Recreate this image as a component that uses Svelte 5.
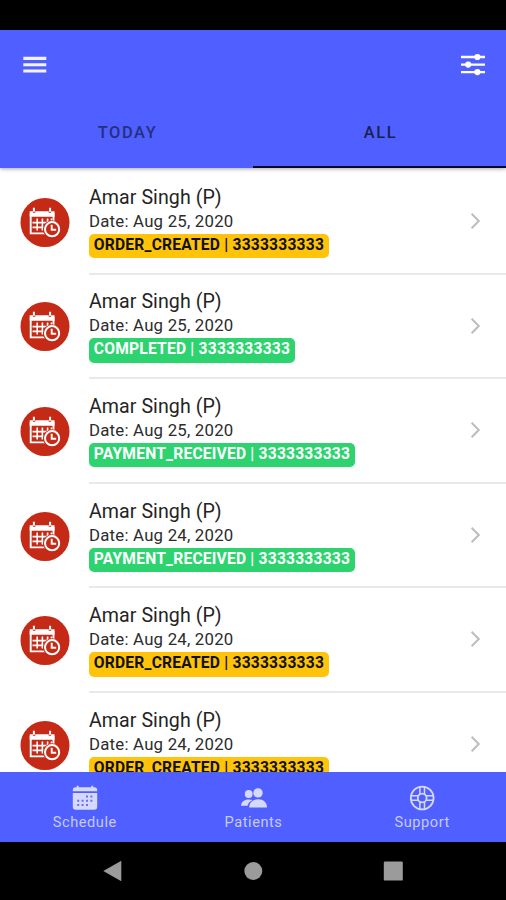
<script>
  const orders = [
    { name: 'Amar Singh (P)', date: 'Aug 25, 2020', status: 'ORDER_CREATED', phone: '3333333333' },
    { name: 'Amar Singh (P)', date: 'Aug 25, 2020', status: 'COMPLETED', phone: '3333333333' },
    { name: 'Amar Singh (P)', date: 'Aug 25, 2020', status: 'PAYMENT_RECEIVED', phone: '3333333333' },
    { name: 'Amar Singh (P)', date: 'Aug 24, 2020', status: 'PAYMENT_RECEIVED', phone: '3333333333' },
    { name: 'Amar Singh (P)', date: 'Aug 24, 2020', status: 'ORDER_CREATED', phone: '3333333333' },
    { name: 'Amar Singh (P)', date: 'Aug 24, 2020', status: 'ORDER_CREATED', phone: '3333333333' }
  ];
</script>

<div class="screen">
  <div class="status"></div>
  <header>
    <div class="toolbar">
      <svg width="24" height="18" viewBox="0 0 24 18" fill="#f3f4ff" aria-label="Menu">
        <path d="M.3 .8h23v3.1H.3zM.3 7.2h23v3.1H.3zM.3 13.5h23v3.1H.3z" />
      </svg>
      <svg width="26" height="24" viewBox="0 0 26 24" fill="#fff" aria-label="Filters">
        <path d="M1 2.8h24v2.4H1zM1 10.4h24v2.4H1zM1 17.9h24v2.4H1z" />
        <circle cx="17.4" cy="4" r="3.1" /><circle cx="8.2" cy="11.6" r="3.1" /><circle cx="17.4" cy="19.1" r="3.1" />
      </svg>
    </div>
    <nav class="tabs">
      <div class="tab"><span>TODAY</span></div>
      <div class="tab active"><span>ALL</span></div>
    </nav>
  </header>

  <main>
    {#each orders as order}
      <div class="row">
        <svg class="avatar" width="50" height="49" viewBox="-.5 0 50 49">
          <circle cx="24.5" cy="24.5" r="24.5" fill="#c42a16" />
          <g stroke="#fff" fill="none">
            <path d="M10.2 15v20.4H27M33 15v9.5" stroke-width="1.9" />
            <path d="M9.2 13.2h3.2v1.6h2.4v-1.6h13.4v1.6h2.4v-1.6h3.4v5.6H9.2z" fill="#fff" stroke="none" />
            <path d="M13.4 9.8v4M29.6 9.8v4" stroke-width="2" />
            <path d="M12 24.6h18.5M12 29.4h13.5M16.7 20.5v12M21.9 20.5v12M27.1 20.5v5.5M31 20.5v3" stroke-width="1.6" />
            <circle cx="31.6" cy="31.2" r="9" fill="#c42a16" stroke="none" />
            <circle cx="31.6" cy="31.2" r="7.1" stroke-width="2" />
            <path d="M31.2 26.8v4.9h4.5" stroke-width="1.9" />
          </g>
        </svg>
        <div class="body">
          <div class="info">
            <div class="name">{order.name}</div>
            <div class="date">Date: {order.date}</div>
            <div class="badge" class:pending={order.status === 'ORDER_CREATED'}>{order.status} | {order.phone}</div>
          </div>
          <svg class="chevron" width="12" height="18" viewBox="0 0 12 18" fill="none" stroke="#bdbdbd" stroke-width="2">
            <path d="M1.6 1.7 8.8 9l-7.2 7.3" />
          </svg>
        </div>
      </div>
    {/each}
  </main>

  <nav class="bottom">
    <div class="item">
      <svg width="26" height="26" viewBox="0 0 26 26" fill="#d6d9ff">
        <path d="M3.8 2.2h1V.8h1.9v1.4h12.6V.8h1.9v1.4h1a3 3 0 0 1 3 3v1.1H.8V5.2a3 3 0 0 1 3-3zM.8 8h24.4v13.7a3 3 0 0 1-3 3H3.8a3 3 0 0 1-3-3z" />
        <path fill="#6570fa" d="M14 10.5h2v2h-2zM18.4 10.5h2v2h-2zM5.2 14.8h2v2h-2zM9.6 14.8h2v2h-2zM14 14.8h2v2h-2zM18.4 14.8h2v2h-2zM5.2 19h2v2h-2zM9.6 19h2v2h-2zM14 19h2v2h-2z" />
      </svg>
      <span>Schedule</span>
    </div>
    <div class="item">
      <svg width="26" height="26" viewBox="0 0 26 26" fill="#d6d9ff">
        <circle cx="17" cy="7.9" r="4.7" />
        <path d="M8.2 22.4c0-5 3.6-8.2 8.9-8.2s8.9 3.2 8.9 8.2z" />
        <circle cx="7.7" cy="9" r="3.9" />
        <path d="M0 20.8c.2-4 3.2-6.4 7.7-6.4 1.5 0 2.8.2 3.9.7-3 1.5-4.5 3.3-5 5.7z" />
      </svg>
      <span>Patients</span>
    </div>
    <div class="item">
      <svg width="26" height="26" viewBox="0 0 26 26" fill="none" stroke="#d6d9ff" stroke-width="1.8">
        <circle cx="13.2" cy="13" r="11.4" /><circle cx="13.2" cy="13" r="4.4" />
        <path d="M10.9 1.8v7.3M15.5 1.8v7.3M10.9 16.9v7.3M15.5 16.9v7.3M2 10.7h7.3M2 15.3h7.3M17.1 10.7h7.3M17.1 15.3h7.3" stroke-width="1.5" />
      </svg>
      <span>Support</span>
    </div>
  </nav>

  <div class="system">
    <svg width="20" height="22" viewBox="0 0 20 22" fill="#9b9b9b"><path d="M18.3.8v20.4L.3 11z" /></svg>
    <svg width="20" height="22" viewBox="0 0 20 22" fill="#9b9b9b"><circle cx="10.3" cy="11" r="9" /></svg>
    <svg width="20" height="22" viewBox="0 0 20 22" fill="#9b9b9b"><rect x=".8" y="1.6" width="19" height="19" rx="1.2" /></svg>
  </div>
</div>

<style>
  :global(body) {
    margin: 0;
    background: #000;
  }
  .screen {
    display: flex;
    flex-direction: column;
    width: 506px;
    height: 900px;
    overflow: hidden;
    font-family: Roboto, sans-serif;
    background: #fff;
  }
  .status {
    flex: 0 0 29.5px;
    background: #000;
  }
  header {
    flex: 0 0 138px;
    display: flex;
    flex-direction: column;
    background: #505fff;
    box-shadow: 0 1px 4px rgba(0, 0, 0, 0.35);
    z-index: 1;
  }
  .toolbar {
    height: 70.5px;
    display: flex;
    align-items: center;
    justify-content: space-between;
    padding: 0 20px 0 23px;
  }
  .tabs {
    flex: 1;
    display: flex;
  }
  .tab {
    flex: 1;
    display: flex;
    justify-content: center;
    align-items: center;
    box-sizing: border-box;
    border-bottom: 2px solid transparent;
    padding-left: 2px;
    font-size: 16.4px;
    font-weight: 500;
    letter-spacing: 1.6px;
    color: #242f82;
  }
  .tab.active {
    border-color: #080a20;
    color: #1b2050;
  }
  main {
    flex: 1;
    min-height: 0;
    overflow: hidden;
    padding-top: 2.5px;
  }
  .row {
    display: flex;
    height: 104.6px;
    padding-left: 20px;
  }
  .avatar {
    margin: 27.8px 19px 0 0;
    flex: none;
  }
  .body {
    flex: 1;
    display: flex;
    justify-content: space-between;
    box-sizing: border-box;
    padding: 14.9px 24px 0 0;
    border-bottom: 2px solid #e9e9e9;
  }
  .name {
    font-size: 19.6px;
    letter-spacing: 0.06px;
    line-height: 26px;
    color: #242424;
  }
  .date {
    font-size: 16.8px;
    letter-spacing: 0.22px;
    line-height: 20px;
    color: #2c2c2c;
  }
  .badge {
    display: inline-block;
    height: 24.5px;
    box-sizing: border-box;
    margin-top: 2.9px;
    padding: 0 4.8px;
    border-radius: 5px;
    font-size: 15.6px;
    letter-spacing: 0.21px;
    font-weight: 700;
    line-height: 22px;
    white-space: nowrap;
    color: #fff;
    background: #2dd36f;
  }
  .badge.pending {
    color: #111;
    background: #ffc409;
  }
  .chevron {
    margin-top: 27.2px;
  }
  .bottom {
    flex: 0 0 70px;
    display: flex;
    background: #505fff;
    z-index: 1;
  }
  .item {
    flex: 1;
    display: flex;
    flex-direction: column;
    align-items: center;
    padding: 13px 0 0 1px;
    color: #c5caff;
    font-size: 14.6px;
    line-height: 18px;
    letter-spacing: 0.55px;
  }
  .item span {
    margin-top: 1.6px;
  }
  .system {
    flex: 0 0 58px;
    display: flex;
    justify-content: center;
    align-items: center;
    gap: 120px;
    background: #000;
  }
</style>
